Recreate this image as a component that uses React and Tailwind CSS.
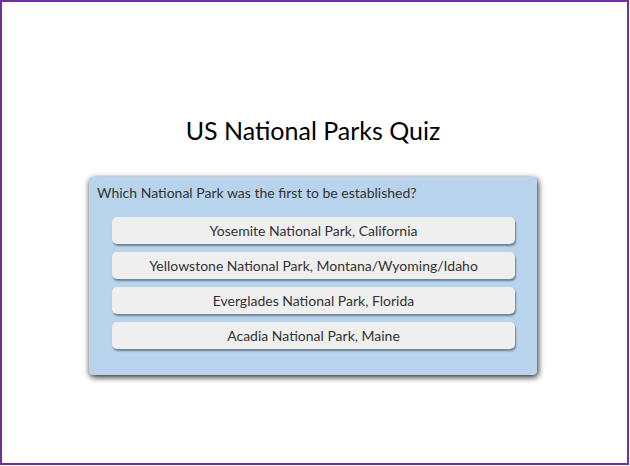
import React from "react";

const answers = [
  "Yosemite National Park, California",
  "Yellowstone National Park, Montana/Wyoming/Idaho",
  "Everglades National Park, Florida",
  "Acadia National Park, Maine",
];

const App = () => {
  return (
    <div className="w-[629px] h-[465px] border-2 border-[#7030a0] bg-white flex flex-col items-center pt-[112px] pr-[3px] font-['Lato','Noto_Sans',sans-serif]">
      <h1 className="text-[25px] leading-[32px] text-black">US National Parks Quiz</h1>

      {/* Quiz card */}
      <div className="mt-[31px] w-[448px] h-[198px] bg-[#b8d4ec] rounded-[4px] shadow-[1px_2px_6px_rgba(0,0,0,0.9)] pt-[6px] pl-[8px]">
        <p className="text-[14px] leading-[20px] text-[#333]">Which National Park was the first to be established?</p>
        <div className="mt-[14px] ml-[15px] flex flex-col gap-[8px]">
          {answers.map((a) => (
            <button
              key={a}
              className="w-[403px] h-[27px] bg-[#efefef] rounded-[5px] shadow-[1px_2px_2px_rgba(0,0,0,0.4)] text-[14px] text-[#333] text-center"
            >
              {a}
            </button>
          ))}
        </div>
      </div>
    </div>
  );
};

export default App;
